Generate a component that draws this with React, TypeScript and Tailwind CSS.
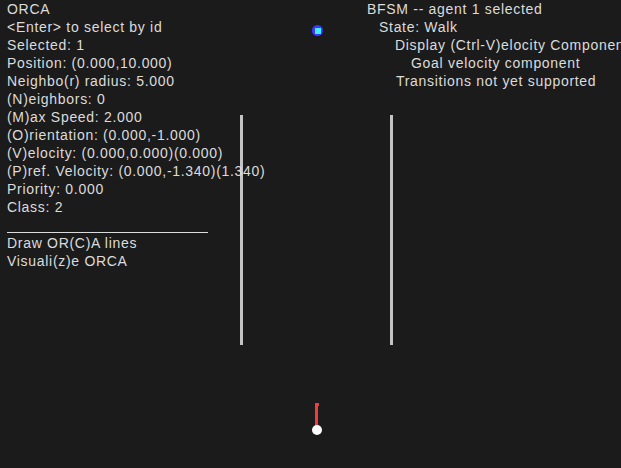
import React from "react";

const leftLines = [
  "ORCA",
  "<Enter> to select by id",
  "Selected: 1",
  "Position: (0.000,10.000)",
  "Neighbo(r) radius: 5.000",
  "(N)eighbors: 0",
  "(M)ax Speed: 2.000",
  "(O)rientation: (0.000,-1.000)",
  "(V)elocity: (0.000,0.000)(0.000)",
  "(P)ref. Velocity: (0.000,-1.340)(1.340)",
  "Priority: 0.000",
  "Class: 2",
];

export default function App() {
  return (
    <div
      className="relative w-[621px] h-[468px] overflow-hidden bg-[#1b1b1b] text-[#dcdcdc] text-[14px] leading-[18px] tracking-[0.7px]"
      style={{ fontFamily: '"Liberation Sans", Arial, sans-serif' }}
    >
      {/* canvas drawings */}
      <div className="absolute left-[240px] top-[115px] w-[3px] h-[230px] bg-[#c4c4c4]" />
      <div className="absolute left-[390px] top-[115px] w-[3px] h-[230px] bg-[#c4c4c4]" />
      <div className="absolute left-[312px] top-[25px] w-[11px] h-[11px] rounded-full bg-[#3a3aff] flex items-center justify-center">
        <div className="w-[6px] h-[6px] bg-[#44eeff]" />
      </div>
      <div className="absolute left-[315px] top-[403px] w-[3px] h-[26px] bg-[#f03c3c]" />
      <div className="absolute left-[317px] top-[403px] w-[2px] h-[3px] bg-[#f03c3c]" />
      <div className="absolute left-[312px] top-[425px] w-[10px] h-[10px] rounded-full bg-white" />

      <div className="relative flex justify-between">
        {/* left panel */}
        <div className="pl-[7px] flex flex-col">
          {leftLines.map((l) => (
            <div key={l} className="whitespace-pre">{l}</div>
          ))}
          <div className="h-[16px]" />
          <div className="w-[201px] h-px bg-[#dcdcdc] mb-[1px]" />
          <div>Draw OR(C)A lines</div>
          <div>Visuali(z)e ORCA</div>
        </div>
        {/* right panel */}
        <div className="w-[254px] flex flex-col whitespace-nowrap">
          <div>BFSM -- agent 1 selected</div>
          <div className="pl-[12px]">State: Walk</div>
          <div className="pl-[28px]">Display (Ctrl-V)elocity Component</div>
          <div className="pl-[44px]">Goal velocity component</div>
          <div className="pl-[29px]">Transitions not yet supported</div>
        </div>
      </div>
    </div>
  );
}
